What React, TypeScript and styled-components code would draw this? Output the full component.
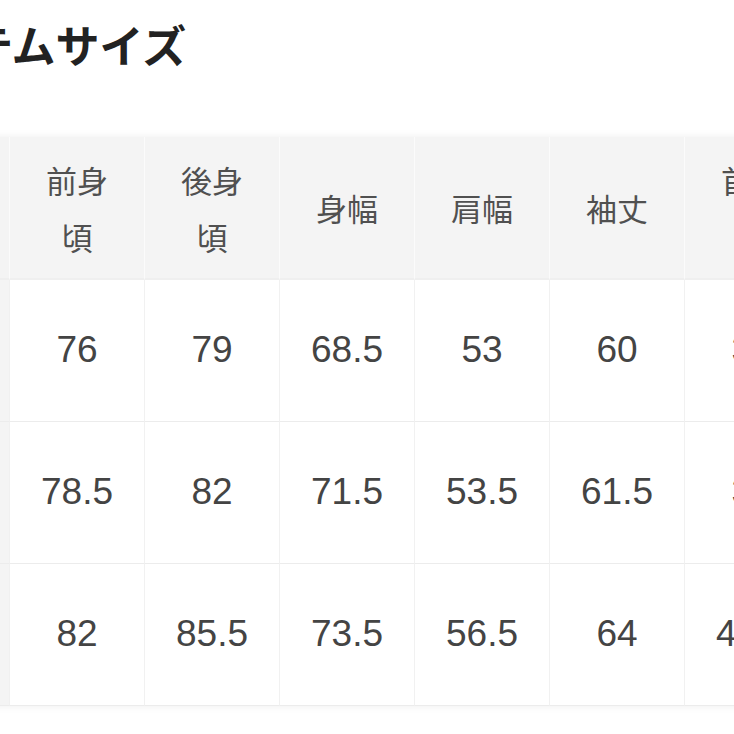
import React from "react";
import styled, { createGlobalStyle } from "styled-components";

const Global = createGlobalStyle`
  html, body {
    margin: 0;
    padding: 0;
    background: #ffffff;
  }
  body {
    width: 734px;
    height: 734px;
    overflow: hidden;
    font-family: "Liberation Sans", "Noto Sans CJK JP", sans-serif;
  }
`;

const Page = styled.div`
  width: 734px;
  height: 734px;
  overflow: hidden;
  display: flex;
  flex-direction: column;
`;

const Title = styled.h2`
  margin: 22px 0 0 -116px;
  font-family: "Noto Sans CJK JP", sans-serif;
  font-size: 44px;
  line-height: 44px;
  font-weight: 700;
  color: #222;
  white-space: nowrap;
  letter-spacing: 0;
`;

const Table = styled.div`
  margin: 71px 0 0 -110px;
  display: grid;
  grid-template-columns: 120px repeat(6, 135px);
  grid-template-rows: 143px repeat(3, 142px);
  width: max-content;
  box-shadow: 0 0 8px rgba(0, 0, 0, 0.07);
  background: #fff;
`;

const HeadCell = styled.div`
  background: #f4f4f4;
  border-right: 1px solid #fbfbfb;
  border-bottom: 2px solid #efefef;
  display: flex;
  align-items: center;
  justify-content: center;
  text-align: center;
  font-family: "Noto Sans CJK JP", sans-serif;
  font-size: 31px;
  line-height: 57px;
  color: #505050;
  padding: 0 20px;
  box-sizing: border-box;
  white-space: pre-line;
`;

const LabelCell = styled.div`
  background: #f4f4f4;
  border-right: 1px solid #f0f0f0;
  border-bottom: 1px solid #ececec;
  display: flex;
  align-items: center;
  justify-content: center;
  font-size: 34px;
  color: #555;
`;

const Cell = styled.div`
  background: #ffffff;
  border-right: 1px solid #f1f1f1;
  border-bottom: 1px solid #ececec;
  display: flex;
  align-items: center;
  justify-content: center;
  font-family: "Liberation Sans", "Noto Sans CJK JP", sans-serif;
  font-size: 37px;
  color: #444;
  padding-bottom: 2px;
  box-sizing: border-box;
`;

const headers = ["前身\n頃", "後身\n頃", "身幅", "肩幅", "袖丈", "首回\nり"];

const rows = [
  { size: "S", values: ["76", "79", "68.5", "53", "60", "38"] },
  { size: "M", values: ["78.5", "82", "71.5", "53.5", "61.5", "39"] },
  { size: "L", values: ["82", "85.5", "73.5", "56.5", "64", "40.5"] },
];

export default function App() {
  return (
    <Page>
      <Global />
      <Title>アイテムサイズ</Title>
      <Table>
        <HeadCell>サイズ</HeadCell>
        {headers.map((h) => (
          <HeadCell key={h}>{h}</HeadCell>
        ))}
        {rows.map((r) => (
          <React.Fragment key={r.size}>
            <LabelCell>{r.size}</LabelCell>
            {r.values.map((v, i) => (
              <Cell key={i}>{v}</Cell>
            ))}
          </React.Fragment>
        ))}
      </Table>
    </Page>
  );
}
